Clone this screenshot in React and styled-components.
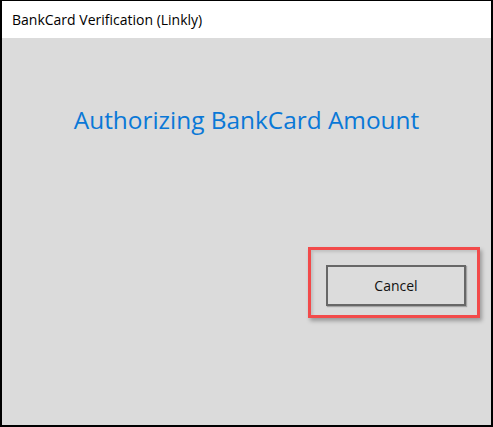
import styled, { createGlobalStyle } from "styled-components"

const GlobalStyle = createGlobalStyle`
  html, body {
    margin: 0;
    padding: 0;
    background: #000;
  }
  * {
    box-sizing: border-box;
  }
`

const Window = styled.div`
  width: 493px;
  height: 427px;
  display: flex;
  flex-direction: column;
  border: 2px solid #000;
  border-top-width: 1px;
  background: #dbdbdb;
`

const TitleBar = styled.div`
  height: 37px;
  flex-shrink: 0;
  display: flex;
  align-items: center;
  padding-left: 10px;
  background: #fff;
  color: #000;
  font-family: "Open Sans", "Noto Sans", sans-serif;
  font-size: 14px;
`

const Content = styled.div`
  flex: 1;
  display: flex;
  flex-direction: column;
`

const Heading = styled.h1`
  margin: 66px 0 0;
  text-align: center;
  color: #0a78d7;
  font-family: "Open Sans", "Noto Sans", sans-serif;
  font-weight: 400;
  font-size: 24.4px;
  line-height: 32px;
`

const ButtonRow = styled.div`
  display: flex;
  justify-content: flex-end;
  padding-right: 11px;
  margin-top: 111px;
`

const Highlight = styled.div`
  border: 3px solid #f24a4a;
  padding: 15px 11px 9px 15px;
  box-shadow: 2px 3px 4px rgba(0, 0, 0, 0.3), inset 2px 2px 3px rgba(0, 0, 0, 0.12);
`

const Button = styled.button`
  width: 140px;
  height: 41px;
  background: #dcdcdc;
  border: 2px solid #676767;
  box-shadow: 1px 1px 1px rgba(0, 0, 0, 0.25);
  color: #111;
  font-family: "Open Sans", "Noto Sans", sans-serif;
  font-size: 14px;
  cursor: pointer;
`

export default function App() {
  return (
    <>
      <GlobalStyle />
      <Window>
        <TitleBar>BankCard Verification (Linkly)</TitleBar>
        <Content>
          <Heading>Authorizing BankCard Amount</Heading>
          <ButtonRow>
            <Highlight>
              <Button>Cancel</Button>
            </Highlight>
          </ButtonRow>
        </Content>
      </Window>
    </>
  )
}
